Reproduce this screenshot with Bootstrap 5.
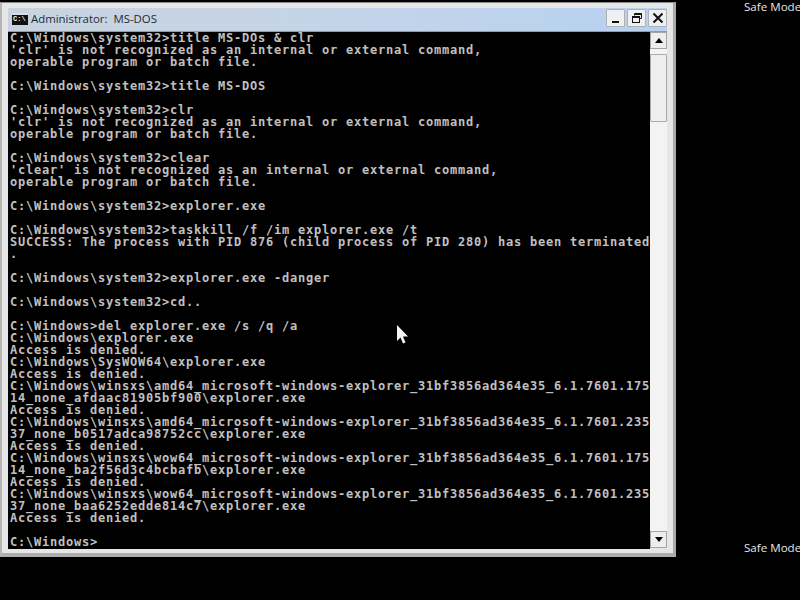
<!DOCTYPE html>
<html lang="en">
<head>
<meta charset="utf-8">
<title>MS-DOS</title>
<link href="https://cdn.jsdelivr.net/npm/bootstrap@5.3.0/dist/css/bootstrap.min.css" rel="stylesheet">
<style>
html,body{width:800px;height:600px;overflow:hidden;background:#000}
.desk{position:relative;width:800px;height:600px;background:#000;overflow:hidden}
.mode{position:absolute;left:744px;color:#e6e6e6;font:11.6px/14px "Open Sans","Liberation Sans",sans-serif;white-space:nowrap}
.mode-top{top:0}
.mode-bot{top:541px}
.win{position:absolute;left:0;top:2px;width:676px;height:555px;background:#e6e6e6;border-top:1px solid #8a8a8a;border-left:2px solid #b5b5b5;border-right:3px solid #aaa;border-bottom:4px solid #aeaeae;padding:5px 6px 3px 6px}
.tbar{height:23px;background:linear-gradient(90deg,#c9d3df 0%,#c4d4e8 50%,#b7d1f1 100%);font:11.4px/22px "Open Sans","Liberation Sans",sans-serif;color:#1d2a3a}
.cmdico{width:16px;height:12px;background:#111;border-top:2px solid #ddd;color:#eee;font:bold 7px/9px "Liberation Mono",monospace;padding-left:1px;overflow:hidden}
.ttl{margin-left:3px}
.wbtns{height:18px;margin-top:1px;gap:2px}
.wbtn{width:19px;height:18px;background:#eef0f2;border:1px solid #b0b0b0;border-radius:1px}
.wbody{height:518px;border-top:1px solid #999}
.term{width:642px;height:517px;background:#000;color:#c0c0c0;margin:0;padding:0 0 0 2px;font:bold 12px/12px "DejaVu Sans Mono",monospace;letter-spacing:.776px;white-space:pre;overflow:visible}
.sbar{width:17px;background:#f3f3f3;height:516px}
.sarr{height:17px;background:#eeeeee;border:1px solid #a5a5a5}
.sthumb{height:68px;margin-top:5px;background:#efefef;border:1px solid #aaa;border-radius:1px}
.cursor{position:absolute;left:396px;top:325px}
</style>
</head>
<body>
<div class="desk">
<div class="mode mode-top">Safe Mode</div>
<div class="mode mode-bot">Safe Mode</div>
<div class="win d-flex flex-column">
<div class="tbar d-flex align-items-start justify-content-between flex-shrink-0">
<div class="d-flex align-items-center ps-1" style="height:21px"><div class="cmdico">C:\</div><span class="ttl">Administrator:&nbsp; MS-DOS</span></div>
<div class="wbtns d-flex">
<div class="wbtn d-flex align-items-center justify-content-center"><svg width="12" height="12" viewBox="0 0 12 12"><rect x="2" y="9" width="7" height="2" fill="#111"/></svg></div>
<div class="wbtn d-flex align-items-center justify-content-center"><svg width="12" height="12" viewBox="0 0 12 12" fill="none" stroke="#111"><path d="M3.5 3.5V1.500H10.500V6.500H8.500"/><path d="M3.500 2.500H10.500"/><rect x="1.500" y="4.500" width="7" height="6"/><path d="M1.500 5.500H8.500"/></svg></div>
<div class="wbtn d-flex align-items-center justify-content-center"><svg width="12" height="12" viewBox="0 0 12 12" fill="none" stroke="#111" stroke-width="2"><path d="M1.500 1.500L10.500 10.500M10.500 1.500L1.500 10.500"/></svg></div>
</div>
</div>
<div class="wbody d-flex">
<pre class="term flex-shrink-0">C:\Windows\system32&gt;title MS-DOs &amp; clr
'clr' is not recognized as an internal or external command,
operable program or batch file.

C:\Windows\system32&gt;title MS-DOS

C:\Windows\system32&gt;clr
'clr' is not recognized as an internal or external command,
operable program or batch file.

C:\Windows\system32&gt;clear
'clear' is not recognized as an internal or external command,
operable program or batch file.

C:\Windows\system32&gt;explorer.exe

C:\Windows\system32&gt;taskkill /f /im explorer.exe /t
SUCCESS: The process with PID 876 (child process of PID 280) has been terminated
.

C:\Windows\system32&gt;explorer.exe -danger

C:\Windows\system32&gt;cd..

C:\Windows&gt;del explorer.exe /s /q /a
C:\Windows\explorer.exe
Access is denied.
C:\Windows\SysWOW64\explorer.exe
Access is denied.
C:\Windows\winsxs\amd64_microsoft-windows-explorer_31bf3856ad364e35_6.1.7601.175
14_none_afdaac81905bf900\explorer.exe
Access is denied.
C:\Windows\winsxs\amd64_microsoft-windows-explorer_31bf3856ad364e35_6.1.7601.235
37_none_b0517adca98752cc\explorer.exe
Access is denied.
C:\Windows\winsxs\wow64_microsoft-windows-explorer_31bf3856ad364e35_6.1.7601.175
14_none_ba2f56d3c4bcbafb\explorer.exe
Access is denied.
C:\Windows\winsxs\wow64_microsoft-windows-explorer_31bf3856ad364e35_6.1.7601.235
37_none_baa6252edde814c7\explorer.exe
Access is denied.

C:\Windows&gt;</pre>
<div class="sbar d-flex flex-column justify-content-between flex-shrink-0">
<div><div class="sarr d-flex align-items-center justify-content-center"><svg width="8" height="5" viewBox="0 0 8 5"><path d="M4 0L8 5H0Z" fill="#000"/></svg></div><div class="sthumb"></div></div>
<div class="sarr d-flex align-items-center justify-content-center"><svg width="8" height="5" viewBox="0 0 8 5"><path d="M0 0H8L4 5Z" fill="#000"/></svg></div>
</div>
</div>
</div>
<svg class="cursor" width="12" height="19" viewBox="0 0 12 19"><path d="M1 0V16L4.500 12.500L7 18.500L9.500 17.500L7 11.500H12Z" fill="#f4f4f4"/></svg>
</div>
</body>
</html>
